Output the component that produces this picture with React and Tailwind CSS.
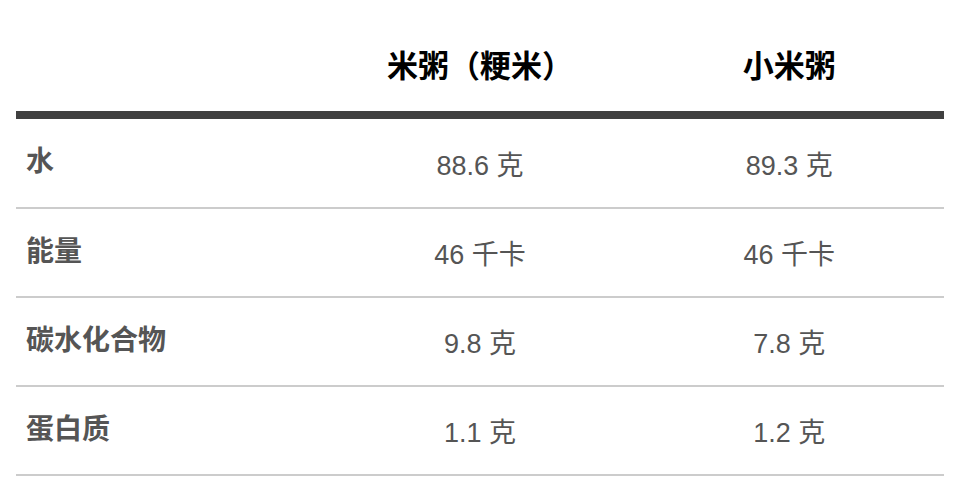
import React from "react";

const rows = [
  { name: "水", a: "88.6 克", b: "89.3 克" },
  { name: "能量", a: "46 千卡", b: "46 千卡" },
  { name: "碳水化合物", a: "9.8 克", b: "7.8 克" },
  { name: "蛋白质", a: "1.1 克", b: "1.2 克" },
];

const font = {
  fontFamily: '"Liberation Sans", "Noto Sans CJK SC", sans-serif',
};

export default function App() {
  return (
    <div className="w-[964px] h-[500px] bg-white pl-4 pr-5" style={font}>
      <table className="w-full table-fixed border-collapse">
        <thead>
          <tr className="h-[115px] border-b-8 border-[#404040]">
            <th className="w-1/3"></th>
            <th className="w-1/3 text-center text-[31px] font-bold text-black pt-[24px]">
              米粥（粳米）
            </th>
            <th className="w-1/3 text-center text-[31px] font-bold text-black pt-[24px]">
              小米粥
            </th>
          </tr>
        </thead>
        <tbody>
          {rows.map((r, i) => (
            <tr
              key={r.name}
              className={
                i === 0
                  ? "h-[93px] border-b-2 border-[#cccccc]"
                  : "h-[89px] border-b-2 border-[#cccccc]"
              }
            >
              <td className="pl-[10px] text-left text-[28px] font-bold text-[#555555] pb-[2px]">
                {r.name}
              </td>
              <td className="text-center text-[27px] text-[#555555] pt-[6px]">
                {r.a}
              </td>
              <td className="text-center text-[27px] text-[#555555] pt-[6px]">
                {r.b}
              </td>
            </tr>
          ))}
        </tbody>
      </table>
    </div>
  );
}
